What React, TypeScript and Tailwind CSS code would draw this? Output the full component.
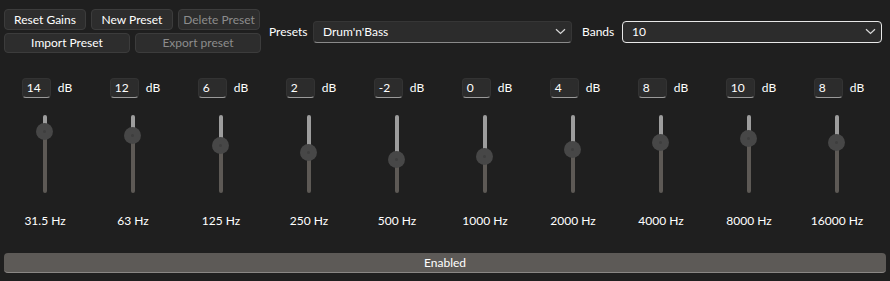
import React from 'react';

const bands = [
  { gain: 14, freq: '31.5 Hz' },
  { gain: 12, freq: '63 Hz' },
  { gain: 6, freq: '125 Hz' },
  { gain: 2, freq: '250 Hz' },
  { gain: -2, freq: '500 Hz' },
  { gain: 0, freq: '1000 Hz' },
  { gain: 4, freq: '2000 Hz' },
  { gain: 8, freq: '4000 Hz' },
  { gain: 10, freq: '8000 Hz' },
  { gain: 8, freq: '16000 Hz' },
];

const Chevron = () => (
  <svg width="11" height="7" viewBox="0 0 11 7" fill="none" className="shrink-0">
    <path d="M1 1.2 L5.5 5.5 L10 1.2" stroke="#d8d8d8" strokeWidth="1.2" />
  </svg>
);

const Btn = ({ label, disabled, className }: { label: string; disabled?: boolean; className: string }) => (
  <button
    className={`flex items-center justify-center rounded-[4px] border border-[#3c3c3c] bg-[#2d2d2d] text-[12px] leading-none ${
      disabled ? 'text-[#8c8c8c]' : 'text-white'
    } ${className}`}
  >
    {label}
  </button>
);

const Combo = ({ value, focused, className }: { value: string; focused?: boolean; className: string }) => (
  <div
    className={`flex h-[22px] items-center justify-between rounded-[4px] bg-[#2c2c2c] pl-[9px] pr-[5px] text-[12px] ${
      focused ? 'border border-[#e8e8e8]' : 'border border-[#363636] border-b-[#8a8a8a]'
    } ${className}`}
  >
    <span>{value}</span>
    <Chevron />
  </div>
);

function Band({ gain, freq }: { gain: number; freq: string }) {
  const thumbCenter = 41 - gain * 1.72;
  const fillTop = Math.round(thumbCenter);
  return (
    <div className="flex w-[88px] flex-col items-center">
      <div className="ml-[4px] flex h-[20px] items-center gap-[7px]">
        <div className="flex h-[20px] w-[29px] items-center rounded-[4px] border border-[#333] border-b-[#9a9a9a] bg-[#2c2c2c] pl-[4px] text-[12px]">
          {gain}
        </div>
        <span className="text-[12px]">dB</span>
      </div>
      <div className="relative mt-[17px] h-[78px] w-[4px]">
        <div className="absolute left-0 top-0 w-[4px] rounded-t-[2px] bg-[#9d9d9d]" style={{ height: fillTop }} />
        <div
          className="absolute bottom-0 left-0 w-[4px] rounded-b-[2px] bg-[#5d5955]"
          style={{ top: fillTop }}
        />
        <div
          className="absolute left-[-7px] flex h-[17px] w-[17px] items-center justify-center rounded-full bg-[#474747]"
          style={{ top: thumbCenter - 8.5 }}
        >
          <div className="h-[3px] w-[3px] rounded-full bg-[#3e3e3e]" />
        </div>
      </div>
      <div className="mt-[20px] text-[12px] leading-[16px]">{freq}</div>
    </div>
  );
}

export default function App() {
  return (
    <div
      className="flex h-[281px] w-[890px] flex-col bg-[#1f1f1f] text-white"
      style={{ fontFamily: 'Lato, "Noto Sans", sans-serif' }}
    >
      {/* top controls */}
      <div className="flex pl-[4px] pt-[9px]">
        <div className="flex flex-col gap-[3px]">
          <div className="flex gap-[5px]">
            <Btn label="Reset Gains" className="h-[21px] w-[82px]" />
            <Btn label="New Preset" className="h-[21px] w-[82px]" />
            <Btn label="Delete Preset" disabled className="h-[21px] w-[82px]" />
          </div>
          <div className="flex gap-[5px]">
            <Btn label="Import Preset" className="h-[20px] w-[126px]" />
            <Btn label="Export preset" disabled className="h-[20px] w-[126px]" />
          </div>
        </div>
        <div className="ml-[8px] flex items-center pt-[1px]">
          <span className="w-[44px] text-[12px]">Presets</span>
          <Combo value="Drum'n'Bass" className="w-[259px]" />
          <span className="ml-[10px] w-[40px] text-[12px]">Bands</span>
          <Combo value="10" focused className="w-[260px]" />
        </div>
      </div>

      {/* band sliders */}
      <div className="mt-[25px] flex pl-[1px]">
        {bands.map((b) => (
          <Band key={b.freq} gain={b.gain} freq={b.freq} />
        ))}
      </div>

      <div className="mx-[4px] mt-[24px] flex h-[20px] items-center justify-center rounded-[4px] border-b border-[#8a8785] bg-[#5d5a57] text-[12px]">
        Enabled
      </div>
    </div>
  );
}
